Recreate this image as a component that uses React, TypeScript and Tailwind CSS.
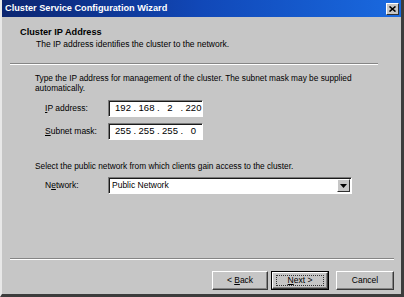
import React from 'react'

const face = 'bg-[#c6c6c6]'

function Field({ parts }: { parts: string[] }) {
  return (
    <div className="w-[95px] h-[17px] bg-white border-t border-l border-[#7a7a7a] border-b border-r border-b-white border-r-white shadow-[inset_1px_1px_0_#1a1a1a] flex items-center pl-[6px] text-[9.5px]">
      {parts.map((p, i) => (
        <React.Fragment key={i}>
          <span className="w-[16px] text-center">{p}</span>
          {i < 3 && <span className="w-[7.5px] text-center">.</span>}
        </React.Fragment>
      ))}
    </div>
  )
}

function Btn({ label, u, def, w }: { label: string; u?: string; def?: boolean; w: string }) {
  const idx = u ? label.indexOf(u) : -1
  const text =
    idx < 0 ? (
      <span>{label}</span>
    ) : (
      <span>
        {label.slice(0, idx)}
        <span className="underline">{label[idx]}</span>
        {label.slice(idx + 1)}
      </span>
    )
  return (
    <div className={`h-[19px] ${w} ${def ? 'border border-black' : ''}`}>
      <div className="relative h-full w-full border-t border-l border-white border-b border-r border-b-[#3a3a3a] border-r-[#3a3a3a] shadow-[inset_-1px_-1px_0_#858585] flex items-center justify-center text-[8.5px]">
        {text}
        {def && <div className="absolute inset-x-[3px] inset-y-[2px] border border-dotted border-[#333]" />}
      </div>
    </div>
  )
}

export default function App() {
  return (
    <div className={`w-[404px] h-[297px] ${face} text-black flex flex-col border-r-[3px] border-b-[3px] border-r-[#3c3c3c] border-b-[#3c3c3c] border-l-2 border-l-[#e8e8e8]`} style={{ fontFamily: '"Liberation Sans", Arial, sans-serif' }}>
      <div className="h-[17px] bg-gradient-to-r from-[#0b2570] via-[#1148b8] to-[#1a6ae0] flex items-center justify-between pl-[3px] pr-[2px]">
        <span className="text-white font-bold text-[9.2px]">Cluster Service Configuration Wizard</span>
        <div className="w-[13px] h-[12px] bg-[#c6c6c6] border-t border-l border-white border-b border-r border-b-[#303030] border-r-[#303030] flex items-center justify-center">
          <svg width="7" height="6" viewBox="0 0 7 6">
            <path d="M0.5 0.5 L6.5 5.5 M6.5 0.5 L0.5 5.5" stroke="#000" strokeWidth="1.6" />
          </svg>
        </div>
      </div>
      <div className="h-[46px] pl-[18px] pt-[10px] text-[8.5px] leading-[11px]">
        <div className="font-bold text-[9.2px]">Cluster IP Address</div>
        <div className="pl-[16px] mt-[1px]">The IP address identifies the cluster to the network.</div>
      </div>
      <div className="ml-[8px] w-[368px] h-[2px] border-t border-[#858585] border-b border-b-white" />
      <div className="flex-1 pl-[33px] text-[8.3px]">
        <div className="mt-[8px] leading-[10px] w-[320px]">Type the IP address for management of the cluster. The subnet mask may be supplied automatically.</div>
        <div className="mt-[7px] flex items-center text-[8.5px]">
          <span className="w-[73px] pl-[10px]"><span className="underline">I</span>P address:</span>
          <Field parts={['192', '168', '2', '220']} />
        </div>
        <div className="mt-[6px] flex items-center text-[8.5px]">
          <span className="w-[73px] pl-[10px]"><span className="underline">S</span>ubnet mask:</span>
          <Field parts={['255', '255', '255', '0']} />
        </div>
        <div className="mt-[21px] leading-[10px]">Select the public network from which clients gain access to the cluster.</div>
        <div className="mt-[6px] flex items-center text-[8.5px]">
          <span className="w-[73px] pl-[10px]">N<span className="underline">e</span>twork:</span>
          <div className="w-[244px] h-[17px] bg-white border-t border-l border-[#7a7a7a] border-b border-r border-b-white border-r-white shadow-[inset_1px_1px_0_#1a1a1a] flex items-center justify-between pl-[3px] pr-[1px]">
            <span>Public Network</span>
            <div className="w-[13px] h-[13px] bg-[#c6c6c6] border-t border-l border-white border-b border-r border-b-[#303030] border-r-[#303030] flex items-center justify-center">
              <svg width="7" height="4" viewBox="0 0 7 4"><path d="M0 0 H7 L3.5 4 Z" fill="#000" /></svg>
            </div>
          </div>
        </div>
      </div>
      <div className="ml-[8px] w-[384px] h-[2px] border-t border-[#858585] border-b border-b-white" />
      <div className="h-[34px] flex items-start justify-end pr-[7px] pt-[11px]">
        <Btn label="< Back" u="B" w="w-[56px]" />
        <div className="ml-[3px] mr-[7px]"><Btn label="Next >" u="N" def w="w-[58px]" /></div>
        <Btn label="Cancel" w="w-[58px]" />
      </div>
    </div>
  )
}
